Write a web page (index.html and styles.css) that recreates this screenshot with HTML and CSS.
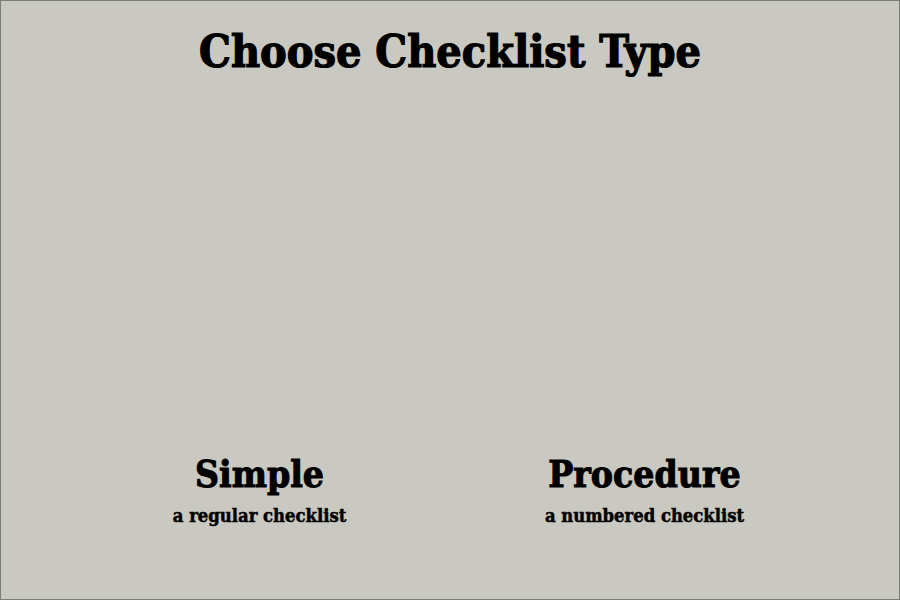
FILE: index.html
```html
<!DOCTYPE html>
<html lang="en">
<head>
    <meta charset="UTF-8">
    <meta name="viewport" content="width=device-width, initial-scale=1.0">
    <title>Choose Checklist Type</title>
    <link rel="stylesheet" href="styles.css">
</head>
<body>
    <div class="screen">
        <h1>Choose Checklist Type</h1>
        <div class="choices">
            <div class="choice">
                <div class="picture"></div>
                <h2>Simple</h2>
                <p>a regular checklist</p>
            </div>
            <div class="choice">
                <div class="picture"></div>
                <h2>Procedure</h2>
                <p>a numbered checklist</p>
            </div>
        </div>
    </div>
</body>
</html>
```

FILE: styles.css
```css
html, body {
    margin: 0;
    padding: 0;
}

body {
    font-family: "DejaVu Serif Condensed", "DejaVu Serif", serif;
    font-stretch: condensed;
    font-weight: bold;
    color: #000;
}

.screen {
    box-sizing: border-box;
    width: 900px;
    height: 600px;
    background: #cac9c1;
    border: 1px solid #7c7c7c;
    display: flex;
    flex-direction: column;
    align-items: center;
}

/* DejaVu bold is lighter than the original black weight */
h1 {
    margin: 22px 0 0;
    font-size: 44.5px;
    line-height: 56px;
    -webkit-text-stroke: 1.2px #000;
}

.choices {
    display: grid;
    grid-template-columns: 300px 300px;
    column-gap: 85px;
    margin: auto 0 73px 4px;
}

.choice {
    text-align: center;
}

.picture {
    height: 300px;
}

h2 {
    margin: 0;
    font-size: 37px;
    line-height: 40px;
    -webkit-text-stroke: 1px #000;
}

.choice p {
    margin: 12px 0 0;
    font-size: 18.3px;
    line-height: 20px;
    -webkit-text-stroke: 0.5px #000;
}
```
